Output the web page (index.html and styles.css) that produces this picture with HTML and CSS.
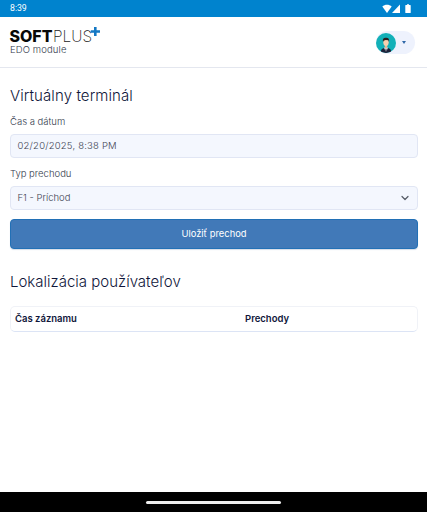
FILE: index.html
```
<!DOCTYPE html>
<html lang="sk">
<head>
    <meta charset="UTF-8">
    <meta name="viewport" content="width=device-width, initial-scale=1.0">
    <title>SOFTPLUS EDO module</title>
    <link rel="stylesheet" href="styles.css">
</head>
<body>
    <!-- Status bar -->
    <div class="status-bar">
        <span class="clock">8:39</span>
        <svg class="status-icons" width="30" height="10" viewBox="0 0 30 10" fill="#fff">
            <path d="M0.3 2.5C2.8 .2 7.2 .2 9.7 2.5L5 9z"/>
            <path d="M18 .5V9H10z"/>
            <path d="M23.5 1H25V.2h2V1h1.2q.5 0 .5.5V8.5q0 .5-.5.5h-4.4q-.5 0-.5-.5v-7q0-.5.5-.5z"/>
        </svg>
    </div>

    <!-- Header -->
    <header class="header">
        <div class="brand">
            <svg class="logo" width="92" height="18" viewBox="0 0 92 18">
                <text class="logo-bold" x="-0.5" y="16" textLength="43" lengthAdjust="spacingAndGlyphs">SOFT</text>
                <text class="logo-thin" x="43" y="16" textLength="39" lengthAdjust="spacingAndGlyphs">PLUS</text>
                <path d="M85.3 1v9M80.8 5.5h9.2" stroke="#1478c4" stroke-width="2.6"/>
            </svg>
            <span class="brand-sub">EDO module</span>
        </div>
        <button class="user-menu">
            <svg class="avatar" width="20" height="20" viewBox="0 0 20 20">
                <clipPath id="round"><circle cx="10" cy="10" r="10"/></clipPath>
                <g clip-path="url(#round)">
                    <rect width="20" height="20" fill="#12b0b8"/>
                    <path d="M4.5 20c0-3 1.2-4.6 4.2-5.2h2.6c3 .6 4.2 2.2 4.2 5.2z" fill="#1b2138"/>
                    <path d="M8 14.5l2 5 2-5z" fill="#fff"/>
                    <path d="M9.6 15.5h.8l.5 4H9.1z" fill="#1b2138"/>
                    <path d="M8.8 11h2.4v3.6l-1.2 1-1.2-1z" fill="#eab690"/>
                    <ellipse cx="10" cy="9.2" rx="2.7" ry="3.7" fill="#f7cfae"/>
                    <path d="M7 9C6.3 5.8 7.6 4.7 9.8 4.8c2.3-.3 3.8 1 3.2 4.2l-.6-1.7-2.7-.4-2.1.8z" fill="#2c2020"/>
                </g>
            </svg>
            <span class="caret"></span>
        </button>
    </header>

    <!-- Content -->
    <main class="content">
        <h2 class="title title-terminal">Virtuálny terminál</h2>
        <form class="terminal-form">
            <label class="label label-date">Čas a dátum</label>
            <div class="field"><span class="date-value">02/20/2025, 8:38 PM</span></div>
            <label class="label label-type">Typ prechodu</label>
            <div class="field">
                <span class="type-value">F1 - Príchod</span>
                <svg width="8" height="6" viewBox="0 0 8 6" fill="none" stroke="#555b66" stroke-width="1.2" stroke-linecap="round" stroke-linejoin="round"><path d="M1 1.5l3 3 3-3"/></svg>
            </div>
            <button type="button" class="save-btn">Uložiť prechod</button>
        </form>

        <h2 class="title title-users">Lokalizácia používateľov</h2>
        <div class="table-head">
            <span class="col-time">Čas záznamu</span>
            <span class="col-pass">Prechody</span>
        </div>
    </main>

    <!-- Gesture bar -->
    <div class="nav-bar"><span class="nav-handle"></span></div>
</body>
</html>
```
FILE: styles.css
```
:root {
    --blue: #0083ce;
    --dark: #10163a;
    --field-bg: #f4f7fe;
    --field-border: #e1e6f4;
}

* {
    box-sizing: border-box;
}

body {
    margin: 0;
    height: 100vh;
    display: flex;
    flex-direction: column;
    overflow: hidden;
    background: #fff;
    color: var(--dark);
    font-family: Inter, "Open Sans", sans-serif;
}

/* Status bar */
.status-bar {
    height: 17px;
    padding: 0 15px 0 10px;
    display: flex;
    align-items: center;
    justify-content: space-between;
    background: var(--blue);
    color: #fff;
}

.clock {
    font: 400 8.7px/17px Roboto, sans-serif;
}

/* Header */
.header {
    height: 51px;
    padding: 0 12px 0 10px;
    display: flex;
    justify-content: space-between;
    border-bottom: 1px solid #e4e7ef;
}

.brand {
    padding-top: 9px;
    display: flex;
    flex-direction: column;
}

.logo {
    display: block;
    overflow: visible;
}

.logo-bold,
.logo-thin {
    font-family: Inter, sans-serif;
    font-size: 15.5px;
}

.logo-bold {
    font-weight: 800;
    fill: #080808;
}

.logo-thin {
    font-weight: 200;
    fill: #222;
}

.brand-sub {
    font-size: 9.5px;
    font-weight: 300;
    line-height: 11px;
    letter-spacing: 0.12px;
    color: #333a4c;
}

.user-menu {
    width: 39px;
    height: 23px;
    margin: 14px 0 0;
    padding: 0 9px 0 0;
    display: flex;
    align-items: center;
    justify-content: space-between;
    border: 0;
    border-radius: 12px;
    background: #eef2fd;
}

.caret {
    border: 2.5px solid transparent;
    border-top: 3px solid #2f68a8;
    border-bottom: 0;
}

/* Content */
.content {
    flex: 1;
    padding: 18px 9px 0 10px;
}

.title {
    margin: 0;
    font-size: 15px;
    font-weight: 300;
    line-height: 20px;
}

.title-terminal {
    letter-spacing: 0.1px;
}

.title-users {
    margin-top: 23px;
}

.terminal-form {
    display: flex;
    flex-direction: column;
}

.label {
    font-size: 9.5px;
    font-weight: 300;
    line-height: 12px;
    color: #333a4c;
}

.label-date {
    margin: 10px 0 6px;
}

.label-type {
    margin: 10px 0 6px;
}

.field {
    height: 24px;
    padding: 0 8px 1px 6.5px;
    display: flex;
    align-items: center;
    justify-content: space-between;
    border: 1px solid var(--field-border);
    border-radius: 4px;
    background: var(--field-bg);
    font-size: 9.5px;
    font-weight: 300;
    color: #3d4352;
}

.date-value {
    letter-spacing: 0.2px;
}

.save-btn {
    height: 30px;
    margin-top: 9px;
    padding: 0 0 1px;
    border: 1px solid #2270b6;
    border-radius: 4px;
    background: #4179b8;
    color: #fff;
    font-family: inherit;
    font-size: 9.4px;
    font-weight: 400;
    box-shadow: 0 1px 1px #d5dce8;
}

/* Table */
.table-head {
    height: 26px;
    margin-top: 14px;
    padding: 0 5px 1px 4px;
    display: grid;
    grid-template-columns: 230px 1fr;
    align-items: center;
    border: 1px solid #f0f2f7;
    border-bottom-color: #dce4f5;
    border-radius: 5px;
    font-size: 9.5px;
    font-weight: 600;
}

/* Gesture bar */
.nav-bar {
    height: 20px;
    display: flex;
    align-items: center;
    justify-content: center;
    background: #000;
}

.nav-handle {
    width: 135px;
    height: 3px;
    border-radius: 2px;
    background: #eee;
}
```
